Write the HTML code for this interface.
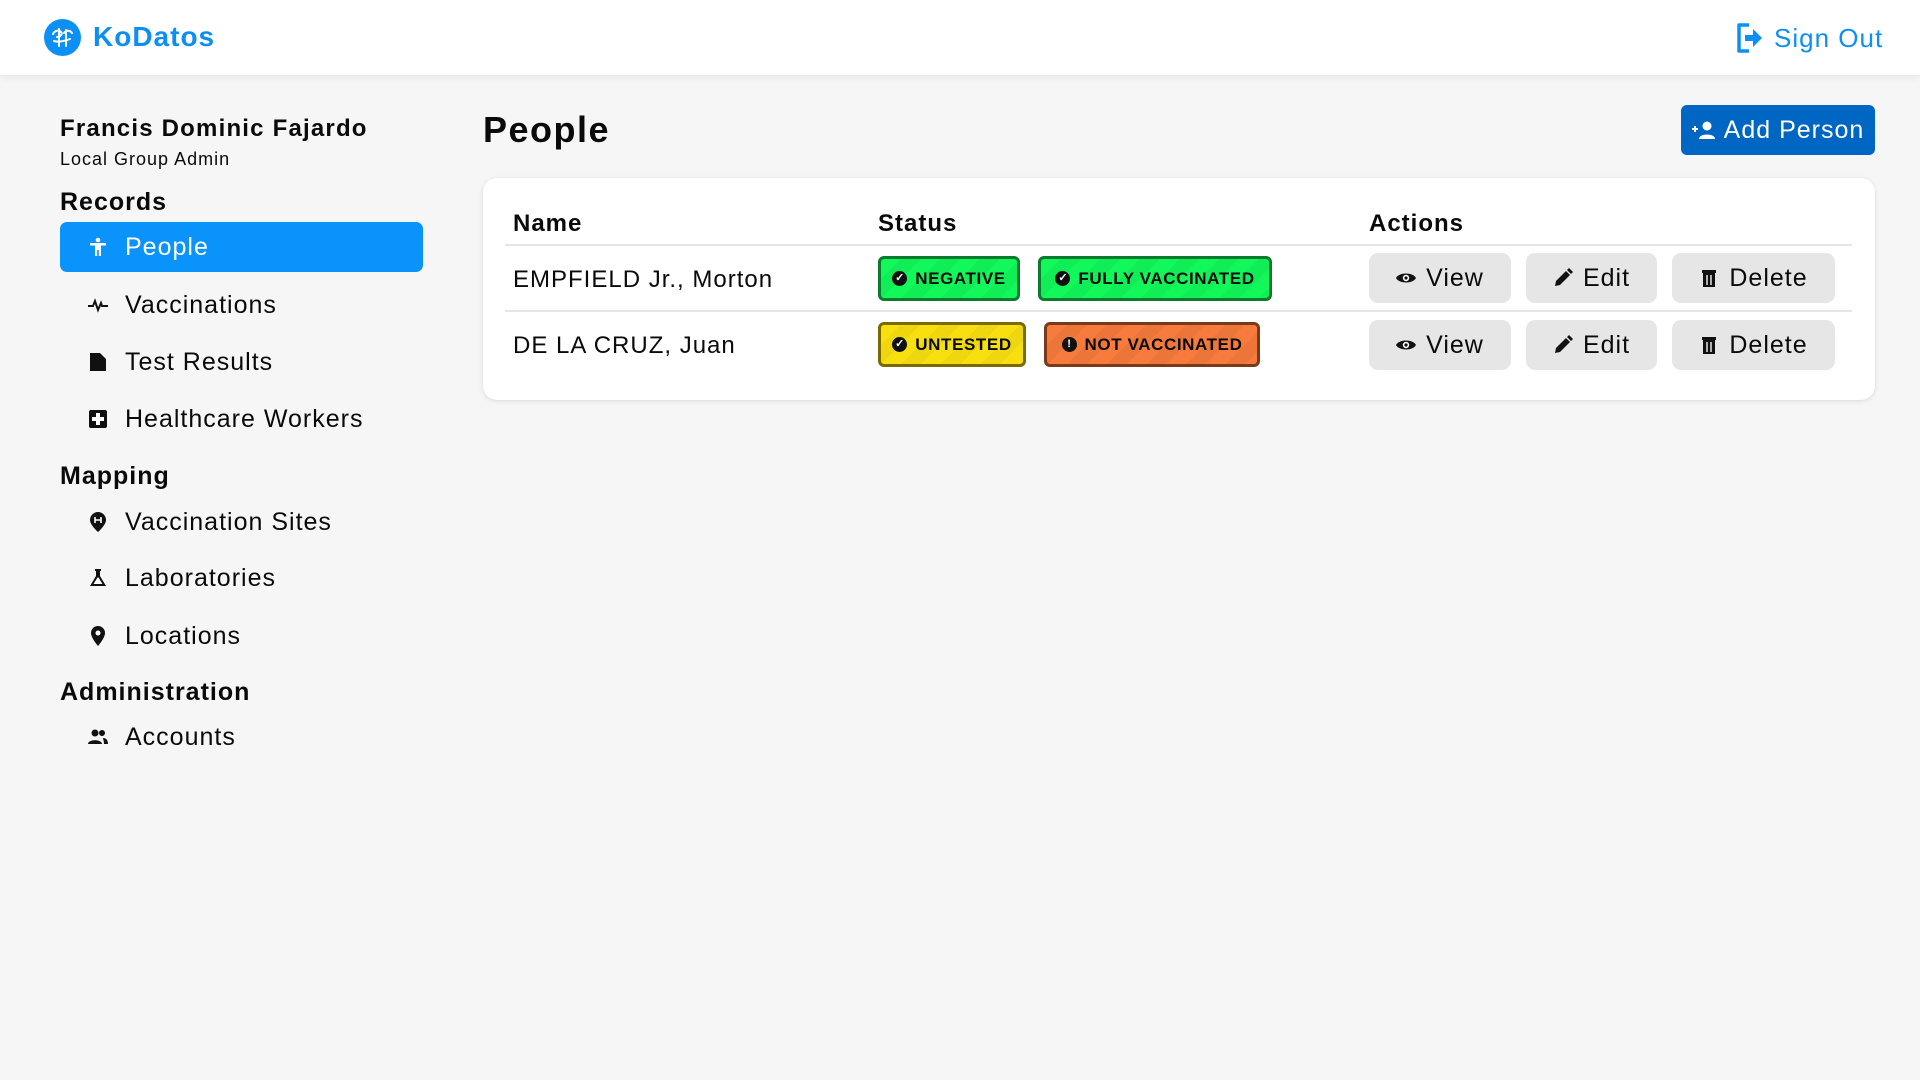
<!DOCTYPE html>
<html><head><meta charset="utf-8"><style>
*{box-sizing:border-box;margin:0;padding:0}
body{width:1920px;height:1080px;background:#f6f6f6;font-family:"Liberation Sans",sans-serif;color:#0a0a0a;position:relative;overflow:hidden;letter-spacing:1px}
.abs{position:absolute;white-space:nowrap}
header{position:absolute;left:0;top:0;width:1920px;height:75px;background:#fff;box-shadow:0 2px 8px rgba(0,0,0,.08)}
.nav{position:absolute;left:98px;font-size:25px;height:40px;white-space:nowrap}
.nav svg{width:20px;height:20px;position:absolute;left:-10px;top:10px}
.nav span{position:absolute;left:27px;top:6px;white-space:nowrap}
.sec{position:absolute;left:60px;font-size:25px;font-weight:bold;white-space:nowrap}
.card{position:absolute;left:483px;top:178px;width:1392px;height:222px;background:#fff;border-radius:14px;box-shadow:0 1px 5px rgba(0,0,0,.12)}
.th{position:absolute;top:210px;font-size:24px;font-weight:bold}
.line{position:absolute;left:505px;width:1347px;height:2px;background:#e6e6e6}
.nm{position:absolute;left:513px;font-size:24px;white-space:nowrap}
.badge{position:absolute;height:45px;border:3px solid;border-radius:6px;font-size:17px;font-weight:bold;display:flex;align-items:center;justify-content:center;gap:8px;white-space:nowrap;letter-spacing:0.6px;background-image:repeating-linear-gradient(135deg,rgba(255,255,255,0) 0 14px,rgba(0,0,0,.04) 14px 28px)}
.badge i{display:inline-block;width:15px;height:15px;border-radius:50%;background:#111;color:#fff;font-style:normal;font-size:11px;line-height:15px;text-align:center;letter-spacing:0}
.g{background-color:#12f75a;border-color:#0b7a2e}
.y{background-color:#f8e010;border-color:#7a6a00}
.o{background-color:#f67b3c;border-color:#7a3a1a}
.btn{position:absolute;height:50px;background:#e6e6e6;border-radius:9px;font-size:25px;display:flex;align-items:center;justify-content:center;gap:10px}
.btn svg{width:20px;height:20px}
</style></head><body>
<header>
<svg class="abs" style="left:44px;top:19px" width="37" height="37" viewBox="0 0 37 37"><circle cx="18.5" cy="18.5" r="18.5" fill="#0d90f5"/><path d="M9 15c2-4 6-4 8-2s-1 5-4 5M28 14c-2-3-6-3-8 0M10 22c3 1 8 1 16-2M15 10v17M22 11v16" stroke="#fff" stroke-width="2" fill="none" stroke-linecap="round"/></svg>
<div class="abs" style="left:93px;top:21px;font-size:28px;font-weight:bold;color:#0d8ff2">KoDatos</div>
<svg class="abs" style="left:1735px;top:22px" width="28" height="32" viewBox="0 0 28 32"><path d="M14 3H4v26h10" stroke="#0d90f5" stroke-width="3.5" fill="none" stroke-linejoin="round"/><path d="M10 13h8V7l9 9-9 9v-6h-8z" fill="#0d90f5"/></svg>
<div class="abs" style="left:1774px;top:23px;font-size:26px;color:#0d90f5">Sign Out</div>
</header>

<div class="abs" style="left:60px;top:115px;font-size:24px;font-weight:bold;letter-spacing:1.2px">Francis Dominic Fajardo</div>
<div class="abs" style="left:60px;top:149px;font-size:18px">Local Group Admin</div>
<div class="sec" style="top:188px">Records</div>
<div class="abs" style="left:60px;top:222px;width:363px;height:50px;background:#0a93fb;border-radius:7px"></div>
<div class="nav" style="top:227px;color:#fff"><svg viewBox="0 0 20 20"><circle cx="10" cy="3" r="2.3" fill="#fff"/><path d="M2 6h16v2.5h-5V19h-2.2v-6h-1.6v6H7V8.5H2z" fill="#fff"/></svg><span>People</span></div>
<div class="nav" style="top:285px"><svg viewBox="0 0 20 20"><path d="M0 11h5l2-5 3 9 3-7 1 3h6" stroke="#111" stroke-width="2" fill="none"/></svg><span>Vaccinations</span></div>
<div class="nav" style="top:342px"><svg viewBox="0 0 20 20"><path d="M2 1h10l6 6v12H2z" fill="#111"/></svg><span>Test Results</span></div>
<div class="nav" style="top:399px"><svg viewBox="0 0 20 20"><rect x="1" y="1" width="18" height="18" rx="2" fill="#111"/><path d="M8 4h4v4h4v4h-4v4H8v-4H4V8h4z" fill="#fff"/></svg><span>Healthcare Workers</span></div>
<div class="sec" style="top:462px">Mapping</div>
<div class="nav" style="top:502px"><svg viewBox="0 0 20 20"><path d="M10 0a8 8 0 0 1 8 8c0 5-8 12-8 12S2 13 2 8a8 8 0 0 1 8-8z" fill="#111"/><path d="M7 5v6M13 5v6M7 8h6" stroke="#fff" stroke-width="1.6"/></svg><span>Vaccination Sites</span></div>
<div class="nav" style="top:558px"><svg viewBox="0 0 20 20"><path d="M7 1h6v2h-1v5l6 10H2L8 8V3H7z" fill="#111"/><path d="M5.5 16l4-6.5h1l4 6.5z" fill="#fff"/></svg><span>Laboratories</span></div>
<div class="nav" style="top:616px"><svg viewBox="0 0 20 20"><path d="M10 0a7 7 0 0 1 7 7c0 5-7 13-7 13S3 12 3 7a7 7 0 0 1 7-7z" fill="#111"/><circle cx="10" cy="7" r="2.5" fill="#fff"/></svg><span>Locations</span></div>
<div class="sec" style="top:678px">Administration</div>
<div class="nav" style="top:717px"><svg viewBox="0 0 20 20"><circle cx="7" cy="6" r="3.5" fill="#111"/><circle cx="14" cy="6" r="3" fill="#111"/><path d="M0 17c0-5 14-5 14 0zM15 11c3 0 5 2 5 6h-4c0-3-1-5-1-6z" fill="#111"/></svg><span>Accounts</span></div>

<div class="abs" style="left:483px;top:109px;font-size:36px;font-weight:bold;letter-spacing:1.5px">People</div>
<div class="abs" style="left:1681px;top:105px;width:194px;height:50px;background:#0066c4;border-radius:6px;color:#fff;font-size:25px;display:flex;align-items:center;justify-content:center;gap:8px"><svg width="24" height="18" viewBox="0 0 24 18"><path d="M0 8h6M3 5v6" stroke="#fff" stroke-width="2"/><circle cx="15" cy="5" r="4.5" fill="#fff"/><path d="M7 18c0-6 16-6 16 0z" fill="#fff"/></svg>Add Person</div>

<div class="card"></div>
<div class="th" style="left:513px">Name</div>
<div class="th" style="left:878px">Status</div>
<div class="th" style="left:1369px">Actions</div>
<div class="line" style="top:244px"></div>
<div class="line" style="top:310px"></div>
<div class="nm" style="top:266px">EMPFIELD Jr., Morton</div>
<div class="nm" style="top:332px">DE LA CRUZ, Juan</div>

<div class="badge g" style="left:878px;top:256px;width:142px"><i>✓</i>NEGATIVE</div>
<div class="badge g" style="left:1038px;top:256px;width:234px"><i>✓</i>FULLY VACCINATED</div>
<div class="badge y" style="left:878px;top:322px;width:148px"><i>✓</i>UNTESTED</div>
<div class="badge o" style="left:1044px;top:322px;width:216px"><i>!</i>NOT VACCINATED</div>

<div class="btn" style="left:1369px;top:253px;width:142px"><svg viewBox="0 0 20 20"><path d="M0 10C3 4 17 4 20 10 17 16 3 16 0 10z" fill="#111"/><circle cx="10" cy="10" r="3.2" fill="#fff"/><circle cx="10" cy="10" r="1.6" fill="#111"/></svg>View</div>
<div class="btn" style="left:1526px;top:253px;width:131px"><svg viewBox="0 0 20 20"><path d="M2 18l1-5L13 3l4 4L7 17zM14 2l2-2 4 4-2 2z" fill="#111"/></svg>Edit</div>
<div class="btn" style="left:1672px;top:253px;width:163px"><svg viewBox="0 0 20 20"><path d="M3 2h14v3H3zM4 5h12v14H4z" fill="#111"/><path d="M8 7v10M12 7v10" stroke="#e6e6e6" stroke-width="1.5"/></svg>Delete</div>
<div class="btn" style="left:1369px;top:320px;width:142px"><svg viewBox="0 0 20 20"><path d="M0 10C3 4 17 4 20 10 17 16 3 16 0 10z" fill="#111"/><circle cx="10" cy="10" r="3.2" fill="#fff"/><circle cx="10" cy="10" r="1.6" fill="#111"/></svg>View</div>
<div class="btn" style="left:1526px;top:320px;width:131px"><svg viewBox="0 0 20 20"><path d="M2 18l1-5L13 3l4 4L7 17zM14 2l2-2 4 4-2 2z" fill="#111"/></svg>Edit</div>
<div class="btn" style="left:1672px;top:320px;width:163px"><svg viewBox="0 0 20 20"><path d="M3 2h14v3H3zM4 5h12v14H4z" fill="#111"/><path d="M8 7v10M12 7v10" stroke="#e6e6e6" stroke-width="1.5"/></svg>Delete</div>
</body></html>
